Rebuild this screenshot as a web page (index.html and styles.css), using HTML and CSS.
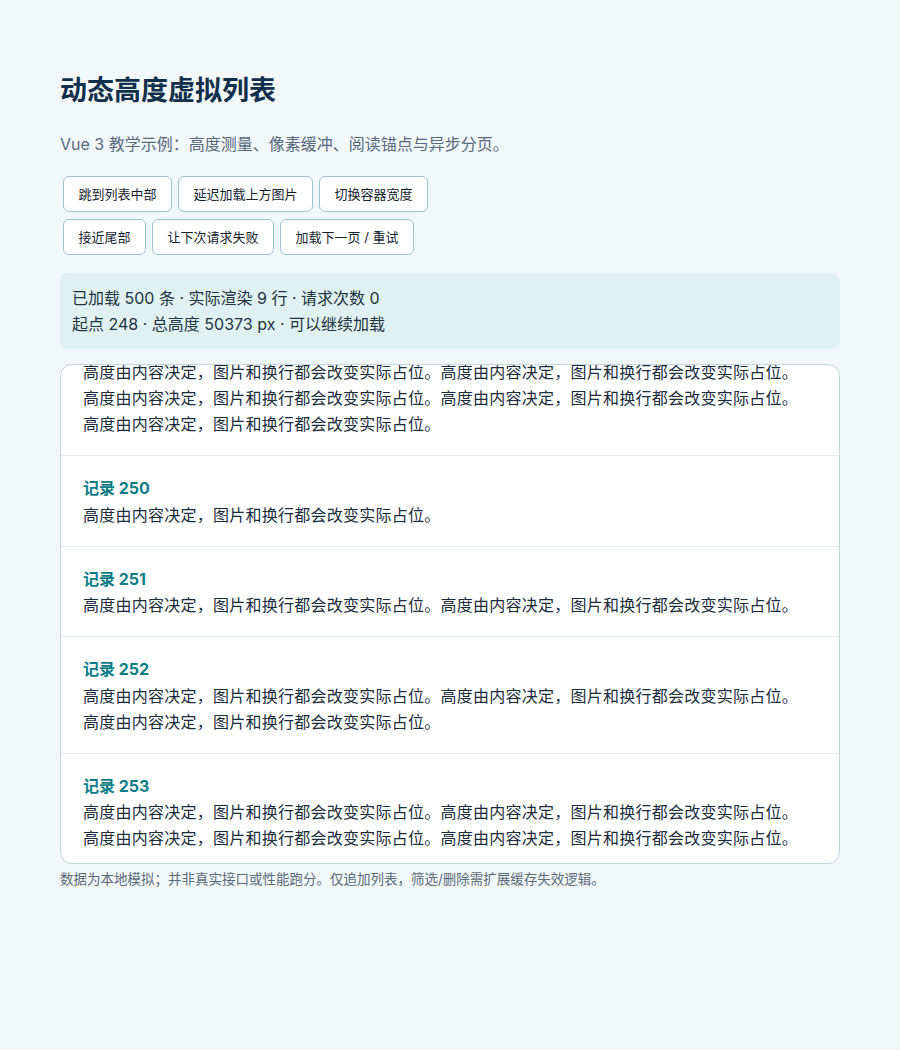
FILE: index.html
```html
<!DOCTYPE html>
<html lang="zh-CN">
<head>
<meta charset="utf-8">
<title>动态高度虚拟列表</title>
<link rel="stylesheet" href="styles.css">
</head>
<body>
<main class="page">
  <h1 class="title">动态高度虚拟列表</h1>
  <p class="subtitle">Vue 3 教学示例：高度测量、像素缓冲、阅读锚点与异步分页。</p>
  <div class="toolbar">
    <button class="btn">跳到列表中部</button>
    <button class="btn">延迟加载上方图片</button>
    <button class="btn">切换容器宽度</button>
    <button class="btn">接近尾部</button>
    <button class="btn">让下次请求失败</button>
    <button class="btn">加载下一页 / 重试</button>
  </div>
  <div class="stats">
    <div>已加载 500 条 · 实际渲染 9 行 · 请求次数 0</div>
    <div>起点 248 · 总高度 50373 px · 可以继续加载</div>
  </div>
  <div class="viewport">
    <div class="track">
      <article class="row">
        <h3 class="row-title">记录 249</h3>
        <p class="row-text">高度由内容决定，图片和换行都会改变实际占位。&#8203;高度由内容决定，图片和换行都会改变实际占位。&#8203;高度由内容决定，图片和换行都会改变实际占位。&#8203;高度由内容决定，图片和换行都会改变实际占位。&#8203;高度由内容决定，图片和换行都会改变实际占位。</p>
      </article>
      <article class="row">
        <h3 class="row-title">记录 250</h3>
        <p class="row-text">高度由内容决定，图片和换行都会改变实际占位。</p>
      </article>
      <article class="row">
        <h3 class="row-title">记录 251</h3>
        <p class="row-text">高度由内容决定，图片和换行都会改变实际占位。&#8203;高度由内容决定，图片和换行都会改变实际占位。</p>
      </article>
      <article class="row">
        <h3 class="row-title">记录 252</h3>
        <p class="row-text">高度由内容决定，图片和换行都会改变实际占位。&#8203;高度由内容决定，图片和换行都会改变实际占位。&#8203;高度由内容决定，图片和换行都会改变实际占位。</p>
      </article>
      <article class="row">
        <h3 class="row-title">记录 253</h3>
        <p class="row-text">高度由内容决定，图片和换行都会改变实际占位。&#8203;高度由内容决定，图片和换行都会改变实际占位。&#8203;高度由内容决定，图片和换行都会改变实际占位。&#8203;高度由内容决定，图片和换行都会改变实际占位。</p>
      </article>
      <article class="row">
        <h3 class="row-title">记录 254</h3>
        <p class="row-text">高度由内容决定，图片和换行都会改变实际占位。</p>
      </article>
    </div>
  </div>
  <p class="note">数据为本地模拟；并非真实接口或性能跑分。仅追加列表，筛选/删除需扩展缓存失效逻辑。</p>
</main>
</body>
</html>
```

FILE: styles.css
```css
html, body {
  margin: 0;
  padding: 0;
  background: #f2f7fa;
}

body {
  font-family: "Inter", "Noto Sans CJK SC", sans-serif;
  color: #1b2d3b;
}

.page {
  width: 780px;
  padding: 74px 60px 40px;
}

.title {
  margin: 0;
  font-size: 27px;
  line-height: 34px;
  font-weight: 700;
  color: #13304a;
}

.subtitle {
  margin: 24px 0 0;
  font-size: 16px;
  line-height: 24px;
  color: #566a7c;
}

.toolbar {
  display: flex;
  flex-wrap: wrap;
  gap: 7px 6px;
  width: 420px;
  margin: 20px 0 0 3px;
}

.btn {
  font-family: inherit;
  font-size: 13px;
  line-height: 18px;
  height: 36px;
  padding: 8px 14.5px;
  background: #ffffff;
  color: #15232f;
  border: 1px solid #9ec2ce;
  border-radius: 6px;
}

.stats {
  margin-top: 18px;
  padding: 12px;
  background: #dff1f1;
  border-radius: 8px;
  font-size: 16px;
  line-height: 26px;
  color: #1f3443;
}

.viewport {
  margin-top: 15px;
  height: 498px;
  overflow: hidden;
  background: #ffffff;
  border: 1px solid #c6d6dd;
  border-radius: 12px;
}

.track {
  margin-top: -51.5px;
}

.row {
  padding: 20px 22px 18px;
  border-bottom: 1px solid #e4ecf0;
}

.row-title {
  margin: 0 0 1.5px;
  font-size: 16px;
  line-height: 24px;
  font-weight: 700;
  color: #0e7d86;
}

.row-text {
  margin: 0;
  font-size: 16px;
  line-height: 26px;
  letter-spacing: 0.25px;
  word-break: keep-all;
  color: #1b2d3b;
}

.note {
  margin: 6px 0 0;
  font-size: 13.5px;
  line-height: 18px;
  color: #5a6b79;
}
```
